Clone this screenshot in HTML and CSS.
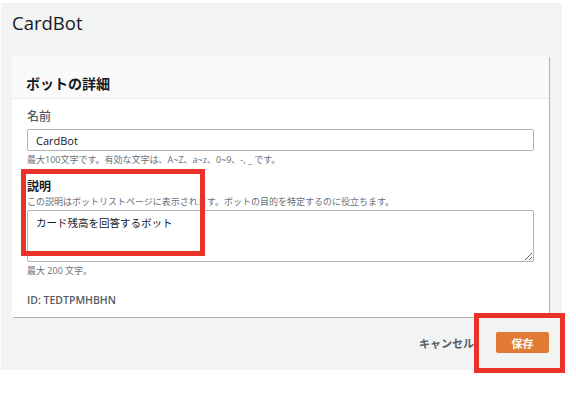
FILE: index.html
```html
<!DOCTYPE html>
<html lang="ja">
<head>
    <meta charset="UTF-8">
    <meta name="viewport" content="width=device-width, initial-scale=1.0">
    <title>CardBot</title>
    <link rel="stylesheet" href="styles.css">
</head>
<body>
    <div class="page">
        <h1 class="title">CardBot</h1>

        <div class="card">
            <div class="card-header">ボットの詳細</div>
            <div class="card-body">
                <div class="field">
                    <label class="label">名前</label>
                    <input class="input" type="text" value="CardBot">
                    <p class="hint">最大100文字です。有効な文字は、A~Z、a~z、0~9、-, _ です。</p>
                </div>
                <div class="field">
                    <label class="label">説明</label>
                    <p class="desc">この説明はボットリストページに表示されます。ボットの目的を特定するのに役立ちます。</p>
                    <textarea class="textarea">カード残高を回答するボット</textarea>
                    <p class="hint">最大 200 文字。</p>
                </div>
                <div class="bot-id">ID: TEDTPMHBHN</div>
            </div>
        </div>

        <div class="actions">
            <button class="btn-cancel">キャンセル</button>
            <button class="btn-save">保存</button>
        </div>
    </div>

    <!-- annotation boxes -->
    <div class="mark mark-desc"></div>
    <div class="mark mark-save"></div>
</body>
</html>
```

FILE: styles.css
```css
body {
    margin: 0;
    background-color: white;
    font-family: "Open Sans", "Noto Sans CJK JP", sans-serif;
    color: #16191f;
    position: relative;
    width: 576px;
    height: 398px;
    overflow: hidden;
}
.page {
    background-color: #f2f3f3;
    margin: 3px 0 0 1px;
    width: 561px;
    height: 367px;
    padding: 0 13px 0 11px;
    box-sizing: border-box;
}
.title {
    margin: 0;
    padding-top: 6px;
    height: 53px;
    box-sizing: border-box;
    font-size: 18.5px;
    font-weight: 400;
    line-height: 28px;
    color: #16191f;
}
.card {
    background-color: white;
    box-shadow: 1px 1px 0 #aab7b8;
}
.card-header {
    background-color: #fafafa;
    border-bottom: 1px solid #eaeded;
    height: 43px;
    box-sizing: border-box;
    padding: 18px 14px 0;
    font-size: 14px;
    font-weight: 700;
    line-height: 20px;
}
.card-body {
    padding: 10px 15px 10px;
}
.label {
    display: block;
    font-size: 12px;
    line-height: 16px;
    color: #545b64;
    font-weight: 500;
}
.field + .field .label {
    font-weight: 700;
    color: #16191f;
}
.input {
    display: block;
    margin-top: 4px;
    width: 100%;
    height: 22px;
    box-sizing: border-box;
    border: 1px solid #aab7b8;
    border-radius: 2px;
    padding: 0 8px;
    font-family: inherit;
    font-size: 11px;
    color: #16191f;
}
.hint, .desc {
    margin: 0;
    font-size: 9px;
    line-height: 13px;
    color: #687078;
}
.hint {
    margin-top: 2px;
}
.field {
    margin-bottom: 13px;
}
.field + .field {
    margin-bottom: 0;
}
.textarea {
    display: block;
    margin-top: 2px;
    width: 100%;
    height: 52px;
    box-sizing: border-box;
    border: 1px solid #aab7b8;
    border-radius: 2px;
    padding: 4px 8px;
    font-family: inherit;
    font-size: 10.5px;
    color: #16191f;
    resize: vertical;
}
.bot-id {
    margin-top: 16px;
    font-size: 10.5px;
    line-height: 14px;
    color: #545b64;
    font-weight: 600;
}
.actions {
    display: flex;
    justify-content: flex-end;
    align-items: center;
    gap: 22px;
    padding-top: 15px;
}
.btn-cancel {
    border: none;
    background: none;
    padding: 0;
    font-family: inherit;
    font-size: 11px;
    font-weight: 700;
    color: #545b64;
}
.btn-save {
    width: 53px;
    height: 21px;
    border: none;
    border-radius: 2px;
    background-color: #e07a35;
    color: white;
    font-family: inherit;
    font-size: 11px;
    font-weight: 700;
    padding: 0;
}
.mark {
    position: absolute;
    border: 5px solid #e8322a;
    box-sizing: border-box;
}
.mark-desc {
    left: 21px;
    top: 169px;
    width: 184px;
    height: 87px;
}
.mark-save {
    left: 474px;
    top: 313px;
    width: 91px;
    height: 60px;
}
```
